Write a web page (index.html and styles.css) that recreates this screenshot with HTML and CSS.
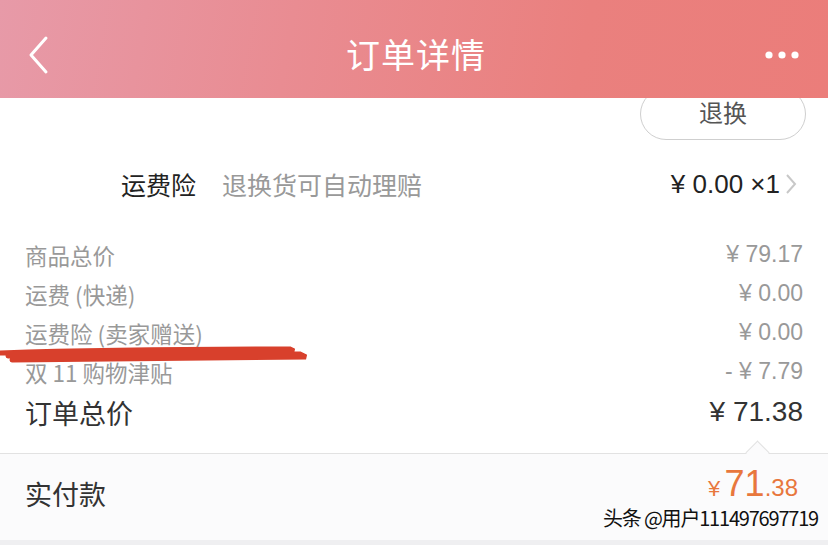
FILE: index.html
```html
<!DOCTYPE html>
<html>
<head>
  <meta charset="UTF-8">
  <title>订单详情</title>
  <link rel="stylesheet" href="styles.css">
</head>
<body>

<div class="header">
  <svg class="back" width="30" height="44" viewBox="0 0 30 44">
    <polyline points="20,5 5,22 20,39" fill="none" stroke="#fff" stroke-width="3" stroke-linecap="round" stroke-linejoin="round"/>
  </svg>
  <div class="title">订单详情</div>
  <svg class="more" width="40" height="12" viewBox="0 0 40 12">
    <circle cx="7" cy="6" r="3.6" fill="#fff"/>
    <circle cx="20" cy="6" r="3.6" fill="#fff"/>
    <circle cx="33" cy="6" r="3.6" fill="#fff"/>
  </svg>
</div>

<div class="btn-row">
  <div class="btn">退换</div>
</div>

<div class="insure-row">
  <span class="insure-name">运费险</span>
  <span class="insure-desc">退换货可自动理赔</span>
  <span class="insure-price num">¥ 0.00 ×1</span>
  <svg class="arrow" width="14" height="24" viewBox="0 0 14 24">
    <polyline points="3,3 11,12 3,21" fill="none" stroke="#c8c8c8" stroke-width="2"/>
  </svg>
</div>

<div class="summary">
  <div class="line"><span>商品总价</span><span class="num">¥ 79.17</span></div>
  <div class="line"><span>运费 (快递)</span><span class="num">¥ 0.00</span></div>
  <div class="line"><span>运费险 (卖家赠送)</span><span class="num">¥ 0.00</span></div>
  <div class="line"><span>双 11 购物津贴</span><span class="num">- ¥ 7.79</span></div>
  <div class="line total"><span>订单总价</span><span class="num">¥ 71.38</span></div>
  <svg class="scribble" width="312" height="22" viewBox="0 0 312 22">
    <path d="M0 9 C60 7 150 5 290 5 L294 7 C200 8 100 9 10 10 M8 12 C100 10 200 9 300 10 L306 13 C200 14 100 15 12 16" fill="none" stroke="#d8402c" stroke-width="5" stroke-linecap="round"/>
  </svg>
</div>

<div class="paid">
  <span class="paid-label">实付款</span>
  <span class="paid-price num"><span class="yen">¥</span> <span class="int">71</span><span class="dec">.38</span></span>
  <div class="watermark">头条 @用户111497697719</div>
</div>

<div class="bottom-strip"></div>

</body>
</html>
```

FILE: styles.css
```css
body {
  margin: 0;
  width: 828px;
  height: 545px;
  overflow: hidden;
  background: #fff;
  font-family: "Noto Sans CJK SC", "Liberation Sans", sans-serif;
  color: #333;
}
.num {
  font-family: "Liberation Sans", "Noto Sans CJK SC", sans-serif;
}
.header {
  height: 98px;
  display: flex;
  align-items: center;
  justify-content: space-between;
  padding: 12px 26px 0 26px;
  box-sizing: border-box;
  background: linear-gradient(100deg, #e79aa8 0%, #e98c92 35%, #ea807e 70%, #eb7d7a 100%);
  position: relative;
  z-index: 2;
}
.title {
  color: #fff;
  font-size: 34px;
  letter-spacing: 1px;
  margin-left: 14px;
  margin-top: -3px;
}
.btn-row {
  display: flex;
  justify-content: flex-end;
  padding-right: 22px;
}
.btn {
  width: 164px;
  height: 40px;
  margin-top: -10px;
  border: 1px solid #cfcfcf;
  border-radius: 26px;
  display: flex;
  justify-content: center;
  align-items: flex-end;
  padding-bottom: 10px;
  font-size: 24px;
  color: #555;
}
.insure-row {
  height: 86px;
  display: flex;
  align-items: center;
  padding: 0 30px 0 121px;
  font-size: 25px;
  margin-top: 1px;
}
.insure-name {
  color: #222;
}
.insure-desc {
  color: #999;
  margin-left: 26px;
  flex: 1;
}
.insure-price {
  color: #222;
  font-size: 26px;
}
.arrow {
  margin-left: 4px;
}
.summary {
  padding: 8px 25px 0 25px;
  position: relative;
}
.line {
  height: 39px;
  display: flex;
  align-items: center;
  justify-content: space-between;
  font-size: 22.5px;
  color: #999;
}
.line .num {
  font-size: 23px;
}
.line.total {
  height: 42px;
  font-size: 27px;
  color: #333;
}
.line.total .num {
  font-size: 28px;
}
.scribble {
  position: absolute;
  left: 0;
  top: 117px;
}
.paid {
  margin-top: 20px;
  height: 86px;
  border-top: 1px solid #e2e2e2;
  background: #fbfbfc;
  display: flex;
  align-items: center;
  justify-content: space-between;
  padding: 0 30px 0 25px;
  position: relative;
}
.paid::before {
  content: "";
  position: absolute;
  right: 62px;
  top: -10px;
  width: 16px;
  height: 16px;
  background: #fbfbfc;
  border-top: 1px solid #e2e2e2;
  border-left: 1px solid #e2e2e2;
  transform: rotate(45deg);
}
.paid-label {
  font-size: 27px;
  color: #333;
  margin-top: -8px;
}
.paid-price {
  color: #e8773d;
  align-self: flex-start;
  margin-top: 9px;
}
.yen {
  font-size: 22px;
}
.int {
  font-size: 36px;
}
.dec {
  font-size: 24px;
}
.watermark {
  position: absolute;
  right: 10px;
  top: 49px;
  font-size: 20px;
  letter-spacing: -1.2px;
  color: #111;
  text-shadow: 0 0 2px #fff, 0 0 2px #fff, 0 0 2px #fff;
}
.bottom-strip {
  height: 6px;
  background: #efeff1;
}
```
